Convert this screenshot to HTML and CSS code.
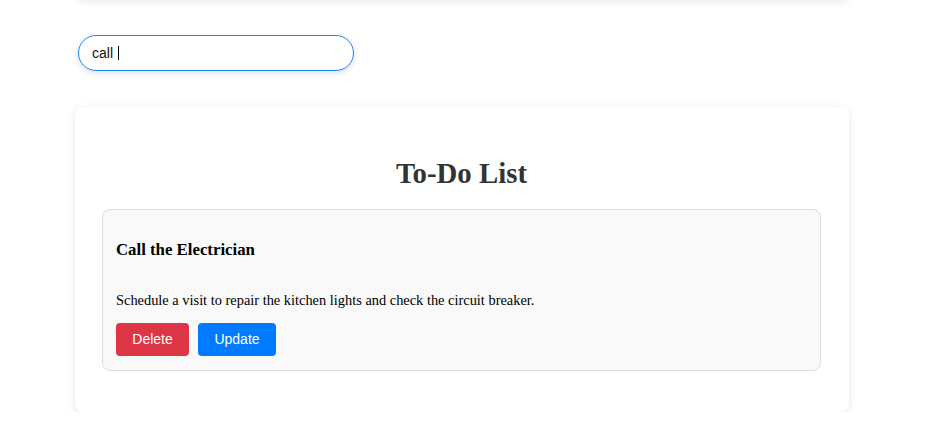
FILE: index.html
```html
<!DOCTYPE html>
<html lang="en">
<head>
<meta charset="utf-8">
<title>To-Do List</title>
<link rel="stylesheet" href="styles.css">
</head>
<body>
<div class="page">
  <div class="top-card"></div>
  <div class="search-row">
    <div class="search-wrap">
      <input class="search" type="text" value="call ">
      <span class="caret"></span>
    </div>
  </div>
  <div class="card">
    <h1 class="title">To-Do List</h1>
    <div class="item">
      <h3 class="item-title">Call the Electrician</h3>
      <p class="item-desc">Schedule a visit to repair the kitchen lights and check the circuit breaker.</p>
      <div class="actions">
        <button class="btn btn-delete">Delete</button>
        <button class="btn btn-update">Update</button>
      </div>
    </div>
  </div>
</div>
</body>
</html>
```

FILE: styles.css
```css
html, body {
  margin: 0;
  padding: 0;
  background: #ffffff;
  overflow: hidden;
}
body {
  padding-right: 15px;
  font-family: "Liberation Serif", "Times New Roman", serif;
  color: #000;
}
.page {
  width: 774px;
  margin: 0 auto;
}
.top-card {
  height: 40px;
  margin-top: -41px;
  background: #fff;
  border-radius: 8px;
  box-shadow: 0 2px 8px rgba(0, 0, 0, 0.1);
}
.search-row {
  margin-top: 36px;
  padding-left: 3px;
}
.search-wrap {
  position: relative;
  width: 276px;
}
.search {
  display: block;
  box-sizing: border-box;
  width: 276px;
  height: 36px;
  padding: 0 13px;
  border: 1px solid #1a85ff;
  border-radius: 18px;
  font-family: "Liberation Sans", Arial, sans-serif;
  font-size: 14px;
  color: #111;
  background: #fff;
  outline: none;
  box-shadow: 0 2px 6px rgba(0, 0, 0, 0.12);
}
.caret {
  position: absolute;
  left: 40px;
  top: 11px;
  width: 1px;
  height: 14px;
  background: #000;
}
.card {
  margin-top: 36px;
  background: #fff;
  border-radius: 8px;
  box-shadow: 0 2px 10px rgba(0, 0, 0, 0.1);
  padding: 30px 28px 41px 27px;
}
.title {
  margin: 20px 0 20px;
  text-align: center;
  font-size: 28.8px;
  font-weight: bold;
  color: #333;
  line-height: 32px;
}
.item {
  background: #f9f9f9;
  border: 1px solid #ddd;
  border-radius: 8px;
  padding: 13px 13px 14px;
}
.item-title {
  margin: 17px 0 0;
  font-size: 16.8px;
  line-height: 20px;
  font-weight: bold;
}
.item-desc {
  margin: 32px 0 0;
  font-size: 14.4px;
  line-height: 17px;
}
.actions {
  display: flex;
  gap: 9px;
  margin-top: 14px;
}
.btn {
  box-sizing: border-box;
  height: 33px;
  font-family: "Liberation Sans", Arial, sans-serif;
  font-size: 14px;
  line-height: 17px;
  padding: 8px 16px;
  border: none;
  border-radius: 4px;
  color: #fff;
  cursor: pointer;
}
.btn-delete {
  background: #dc3545;
  width: 73px;
}
.btn-update {
  background: #007bff;
  width: 78px;
}
```
